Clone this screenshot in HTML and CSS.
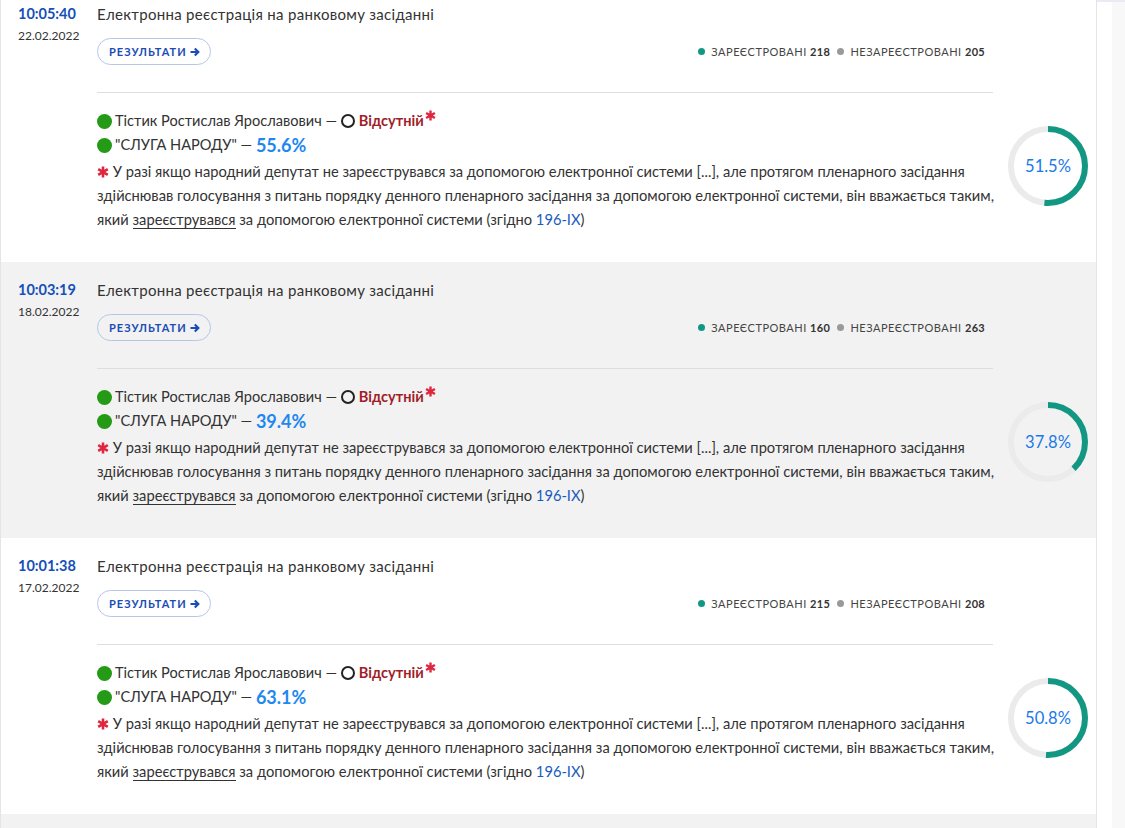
FILE: index.html
```html
<!DOCTYPE html>
<html lang="uk">
<head>
  <meta charset="UTF-8">
  <meta name="viewport" content="width=device-width, initial-scale=1.0">
  <title>Реєстрації депутата</title>
  <link rel="stylesheet" href="styles.css">
</head>
<body>
  <div class="layout">
    <div class="feed">
      <div class="entry">
        <div class="when">
          <div class="time">10:05:40</div>
          <div class="date">22.02.2022</div>
        </div>
        <div class="head">
          <div class="title">Електронна реєстрація на ранковому засіданні</div>
          <div class="actions">
            <a class="results-btn" href="#">РЕЗУЛЬТАТИ <svg class="arrow" viewBox="0 0 10 10" width="10" height="10"><path d="M0.5 5h7.5M4.8 1.5L8.3 5 4.8 8.5" fill="none" stroke="currentColor" stroke-width="2.2"/></svg></a>
            <div class="stats">
              <span class="dot dot-on"></span>ЗАРЕЄСТРОВАНІ <b>218</b>
              <span class="dot dot-off"></span>НЕЗАРЕЄСТРОВАНІ <b>205</b>
            </div>
          </div>
        </div>
        <div class="body">
          <div class="line"><span class="mark"></span>Тістик Ростислав Ярославович — <span class="ring"></span><span class="absent">Відсутній</span><svg class="star" viewBox="0 0 12 12"><path d="M6 0.5v11M1.2 3.2l9.6 5.6M1.2 8.8l9.6-5.6" stroke="currentColor" stroke-width="2.6"/></svg></div>
          <div class="line"><span class="mark"></span>"СЛУГА НАРОДУ" — <span class="pct">55.6%</span></div>
          <p class="note"><svg class="star-inline" viewBox="0 0 12 12"><path d="M6 0.5v11M1.2 3.2l9.6 5.6M1.2 8.8l9.6-5.6" stroke="currentColor" stroke-width="2.6"/></svg> У разі якщо народний депутат не зареєструвався за допомогою електронної системи [...], але протягом пленарного засідання здійснював голосування з питань порядку денного пленарного засідання за допомогою електронної системи, він вважається таким, який <span class="link">зареєструвався</span> за допомогою електронної системи (згідно <span class="law">196-IX</span>)</p>
        </div>
        <div class="chart">
          <svg class="donut" viewBox="0 0 80 80" width="80" height="80">
            <circle cx="40" cy="40" r="37" fill="none" stroke="#ebebeb" stroke-width="6"/>
            <circle cx="40" cy="40" r="37" fill="none" stroke="#129882" stroke-width="6" stroke-dasharray="119.7 232.5" transform="rotate(-90 40 40)"/>
          </svg>
          <span class="donut-label">51.5%</span>
        </div>
      </div>

      <div class="entry alt">
        <div class="when">
          <div class="time">10:03:19</div>
          <div class="date">18.02.2022</div>
        </div>
        <div class="head">
          <div class="title">Електронна реєстрація на ранковому засіданні</div>
          <div class="actions">
            <a class="results-btn" href="#">РЕЗУЛЬТАТИ <svg class="arrow" viewBox="0 0 10 10" width="10" height="10"><path d="M0.5 5h7.5M4.8 1.5L8.3 5 4.8 8.5" fill="none" stroke="currentColor" stroke-width="2.2"/></svg></a>
            <div class="stats">
              <span class="dot dot-on"></span>ЗАРЕЄСТРОВАНІ <b>160</b>
              <span class="dot dot-off"></span>НЕЗАРЕЄСТРОВАНІ <b>263</b>
            </div>
          </div>
        </div>
        <div class="body">
          <div class="line"><span class="mark"></span>Тістик Ростислав Ярославович — <span class="ring"></span><span class="absent">Відсутній</span><svg class="star" viewBox="0 0 12 12"><path d="M6 0.5v11M1.2 3.2l9.6 5.6M1.2 8.8l9.6-5.6" stroke="currentColor" stroke-width="2.6"/></svg></div>
          <div class="line"><span class="mark"></span>"СЛУГА НАРОДУ" — <span class="pct">39.4%</span></div>
          <p class="note"><svg class="star-inline" viewBox="0 0 12 12"><path d="M6 0.5v11M1.2 3.2l9.6 5.6M1.2 8.8l9.6-5.6" stroke="currentColor" stroke-width="2.6"/></svg> У разі якщо народний депутат не зареєструвався за допомогою електронної системи [...], але протягом пленарного засідання здійснював голосування з питань порядку денного пленарного засідання за допомогою електронної системи, він вважається таким, який <span class="link">зареєструвався</span> за допомогою електронної системи (згідно <span class="law">196-IX</span>)</p>
        </div>
        <div class="chart">
          <svg class="donut" viewBox="0 0 80 80" width="80" height="80">
            <circle cx="40" cy="40" r="37" fill="none" stroke="#ebebeb" stroke-width="6"/>
            <circle cx="40" cy="40" r="37" fill="none" stroke="#129882" stroke-width="6" stroke-dasharray="87.9 232.5" transform="rotate(-90 40 40)"/>
          </svg>
          <span class="donut-label">37.8%</span>
        </div>
      </div>

      <div class="entry">
        <div class="when">
          <div class="time">10:01:38</div>
          <div class="date">17.02.2022</div>
        </div>
        <div class="head">
          <div class="title">Електронна реєстрація на ранковому засіданні</div>
          <div class="actions">
            <a class="results-btn" href="#">РЕЗУЛЬТАТИ <svg class="arrow" viewBox="0 0 10 10" width="10" height="10"><path d="M0.5 5h7.5M4.8 1.5L8.3 5 4.8 8.5" fill="none" stroke="currentColor" stroke-width="2.2"/></svg></a>
            <div class="stats">
              <span class="dot dot-on"></span>ЗАРЕЄСТРОВАНІ <b>215</b>
              <span class="dot dot-off"></span>НЕЗАРЕЄСТРОВАНІ <b>208</b>
            </div>
          </div>
        </div>
        <div class="body">
          <div class="line"><span class="mark"></span>Тістик Ростислав Ярославович — <span class="ring"></span><span class="absent">Відсутній</span><svg class="star" viewBox="0 0 12 12"><path d="M6 0.5v11M1.2 3.2l9.6 5.6M1.2 8.8l9.6-5.6" stroke="currentColor" stroke-width="2.6"/></svg></div>
          <div class="line"><span class="mark"></span>"СЛУГА НАРОДУ" — <span class="pct">63.1%</span></div>
          <p class="note"><svg class="star-inline" viewBox="0 0 12 12"><path d="M6 0.5v11M1.2 3.2l9.6 5.6M1.2 8.8l9.6-5.6" stroke="currentColor" stroke-width="2.6"/></svg> У разі якщо народний депутат не зареєструвався за допомогою електронної системи [...], але протягом пленарного засідання здійснював голосування з питань порядку денного пленарного засідання за допомогою електронної системи, він вважається таким, який <span class="link">зареєструвався</span> за допомогою електронної системи (згідно <span class="law">196-IX</span>)</p>
        </div>
        <div class="chart">
          <svg class="donut" viewBox="0 0 80 80" width="80" height="80">
            <circle cx="40" cy="40" r="37" fill="none" stroke="#ebebeb" stroke-width="6"/>
            <circle cx="40" cy="40" r="37" fill="none" stroke="#129882" stroke-width="6" stroke-dasharray="118.1 232.5" transform="rotate(-90 40 40)"/>
          </svg>
          <span class="donut-label">50.8%</span>
        </div>
      </div>

      <div class="entry alt"></div>
    </div>
    <div class="gutter"></div>
    <div class="track"></div>
  </div>
</body>
</html>
```

FILE: styles.css
```css
body {
  font-family: 'Lato', 'Noto Sans', sans-serif;
  background-color: #ffffff;
  color: #333333;
  margin: 0;
  height: 828px;
  overflow: hidden;
}

.layout {
  display: flex;
  height: 100%;
  border-top: 2px solid #ece9f6;
  box-sizing: border-box;
}

.feed {
  width: 1097px;
  flex-shrink: 0;
  border-left: 1px solid #e4e4e4;
  border-right: 1px solid #e4e4e4;
  box-sizing: border-box;
  margin-top: -16px;
}

.gutter {
  width: 15px;
}

.track {
  flex-grow: 1;
  background-color: #f8f8f8;
}

.entry {
  display: grid;
  grid-template-columns: 96px 896px 1fr;
  grid-template-rows: auto auto;
  padding: 18px 0 31px;
  min-height: 276px;
  box-sizing: border-box;
  background-color: #ffffff;
}

.entry.alt {
  background-color: #f2f2f2;
}

.when {
  grid-row: 1 / 3;
  padding-left: 17px;
}

.time {
  font-size: 14.5px;
  font-weight: 700;
  line-height: 20px;
  color: #1450b8;
}

.date {
  margin-top: 4px;
  font-size: 12px;
  line-height: 16px;
  color: #333333;
}

.head {
  border-bottom: 1px solid #dedede;
  padding-bottom: 27px;
}

.title {
  font-size: 15px;
  line-height: 20px;
  letter-spacing: 0.3px;
  color: #333333;
}

.actions {
  display: flex;
  align-items: center;
  justify-content: space-between;
  margin-top: 14px;
  padding-right: 8px;
}

.results-btn {
  display: inline-flex;
  align-items: center;
  gap: 3px;
  height: 27px;
  padding: 0 10px 0 11px;
  box-sizing: border-box;
  border: 1px solid #b4c6ea;
  border-radius: 14px;
  font-size: 11px;
  font-weight: 700;
  letter-spacing: 1px;
  color: #1a4db5;
  text-decoration: none;
}

.arrow {
  display: block;
}

.stats {
  font-size: 11px;
  letter-spacing: 0.5px;
  color: #444444;
}

.stats b {
  color: #333333;
  letter-spacing: 0.3px;
}

.dot {
  display: inline-block;
  width: 7px;
  height: 7px;
  border-radius: 50%;
  margin: 0 6px 1px 0;
}

.dot-on {
  background-color: #129882;
}

.dot-off {
  background-color: #999999;
  margin-left: 4px;
}

.body {
  grid-column: 2;
  padding-top: 16px;
}

.line {
  display: flex;
  align-items: center;
  font-size: 14.6px;
  line-height: 24px;
  white-space: pre;
}

.mark {
  width: 15px;
  height: 15px;
  border-radius: 50%;
  background-color: #249a17;
  margin-right: 3px;
}

.ring {
  width: 10px;
  height: 10px;
  border: 2px solid #222222;
  border-radius: 50%;
  margin-right: 4px;
}

.absent {
  font-weight: 700;
  color: #a01d2a;
}

.star {
  width: 11px;
  height: 11px;
  color: #e0263f;
  align-self: flex-start;
  margin: 1px 0 0 1px;
}

.pct {
  font-size: 18px;
  font-weight: 700;
  color: #1e88f0;
}

.note {
  margin: 2px -6px 0 0;
  font-size: 14.7px;
  line-height: 24px;
  color: #333333;
}

.star-inline {
  width: 12px;
  height: 12px;
  color: #e0263f;
  vertical-align: -1px;
}

.link {
  border-bottom: 1px solid #333333;
  line-height: 16px;
}

.law {
  color: #1a5bbf;
}

.chart {
  grid-column: 3;
  grid-row: 2;
  position: relative;
  width: 80px;
  height: 80px;
  margin: 33px 0 0 15px;
}

.donut {
  display: block;
}

.donut-label {
  position: absolute;
  inset: 0;
  display: flex;
  align-items: center;
  justify-content: center;
  font-size: 16.5px;
  color: #1a7ae8;
}
```
